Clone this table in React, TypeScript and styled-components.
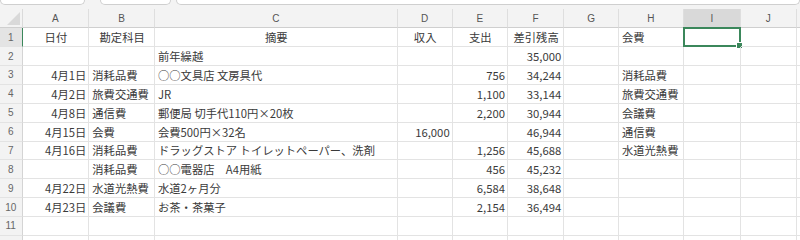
import React from 'react'
import styled, { createGlobalStyle } from 'styled-components'

const GlobalStyle = createGlobalStyle`
  html, body {
    margin: 0;
    padding: 0;
    background: #ffffff;
  }
  body {
    font-family: 'Noto Sans CJK JP', 'Noto Sans', sans-serif;
  }
`

const COLS = ['A', 'B', 'C', 'D', 'E', 'F', 'G', 'H', 'I', 'J']
const COL_WIDTHS = [22.5, 66.8, 65.7, 242.7, 55, 55.3, 56.3, 54.7, 65, 56.7, 56]
const ROW_H = 18.88

type Align = 'left' | 'center' | 'right'

// default alignment per column for body rows
const BODY_ALIGN: Align[] = ['right', 'left', 'left', 'right', 'right', 'right', 'left', 'left', 'left', 'left']

const ROWS: string[][] = [
  ['日付', '勘定科目', '摘要', '収入', '支出', '差引残高', '', '会費', '', ''],
  ['', '', '前年繰越', '', '', '35,000', '', '', '', ''],
  ['4月1日', '消耗品費', '○○文具店 文房具代', '', '756', '34,244', '', '消耗品費', '', ''],
  ['4月2日', '旅費交通費', 'JR', '', '1,100', '33,144', '', '旅費交通費', '', ''],
  ['4月8日', '通信費', '郵便局 切手代110円×20枚', '', '2,200', '30,944', '', '会議費', '', ''],
  ['4月15日', '会費', '会費500円×32名', '16,000', '', '46,944', '', '通信費', '', ''],
  ['4月16日', '消耗品費', 'ドラッグストア トイレットペーパー、洗剤', '', '1,256', '45,688', '', '水道光熱費', '', ''],
  ['', '消耗品費', '○○電器店　A4用紙', '', '456', '45,232', '', '', '', ''],
  ['4月22日', '水道光熱費', '水道2ヶ月分', '', '6,584', '38,648', '', '', '', ''],
  ['4月23日', '会議費', 'お茶・茶菓子', '', '2,154', '36,494', '', '', '', ''],
  ['', '', '', '', '', '', '', '', '', ''],
]

// empty trailing row so the gridlines run on past row 11
const FILLER = ['', '', '', '', '', '', '', '', '', '']

const Page = styled.div`
  width: 800px;
  height: 240px;
  overflow: hidden;
  background: #ffffff;
`

const FormulaStrip = styled.div`
  display: flex;
  align-items: flex-start;
  height: 9px;
  background: #f3f3f3;
`

const StripBox = styled.div<{ $w?: number; $ml: number }>`
  box-sizing: border-box;
  height: 5px;
  margin-left: ${p => p.$ml}px;
  ${p => (p.$w ? `width: ${p.$w}px;` : 'flex: 1;')}
  background: #ffffff;
  border: 1px solid #cfcfcf;
  border-top: none;
  border-radius: 0 0 5px 5px;
`

const Grid = styled.div`
  display: grid;
  grid-template-columns: ${COL_WIDTHS.map(w => `${w}px`).join(' ')} 1fr;
  grid-template-rows: 19.3px repeat(${ROWS.length + 1}, ${ROW_H}px);
`

const Corner = styled.div`
  position: relative;
  box-sizing: border-box;
  background: #f3f3f3;
  border-right: 1px solid #dadada;
  border-bottom: 1px solid #cfcfcf;

  &::after {
    content: '';
    position: absolute;
    right: 2px;
    bottom: 2px;
    width: 0;
    height: 0;
    border-left: 13px solid transparent;
    border-bottom: 13px solid #d9d9d9;
  }
`

const ColHeader = styled.div<{ $active?: boolean }>`
  box-sizing: border-box;
  display: flex;
  align-items: center;
  justify-content: center;
  background: ${p => (p.$active ? '#d9d9d9' : '#f3f3f3')};
  border-right: 1px solid #dedede;
  border-bottom: 1px solid ${p => (p.$active ? '#3b875b' : '#cfcfcf')};
  color: #555;
  font-family: 'Liberation Sans', 'Noto Sans', sans-serif;
  font-size: 10px;
`

const RowHeader = styled.div<{ $active?: boolean }>`
  box-sizing: border-box;
  display: flex;
  align-items: center;
  justify-content: center;
  background: ${p => (p.$active ? '#e4e4e4' : '#f3f3f3')};
  border-right: 1px solid ${p => (p.$active ? '#3b875b' : '#d4d4d4')};
  border-bottom: 1px solid #e3e3e3;
  color: #666;
  font-family: 'Liberation Sans', 'Noto Sans', sans-serif;
  font-size: 10px;
`

const Cell = styled.div<{ $align: Align }>`
  position: relative;
  box-sizing: border-box;
  display: flex;
  align-items: center;
  justify-content: ${p => (p.$align === 'left' ? 'flex-start' : p.$align === 'right' ? 'flex-end' : 'center')};
  padding: 0 2px 0 3px;
  border-right: 1px solid #e3e3e3;
  border-bottom: 1px solid #e3e3e3;
  color: #3a3a3a;
  font-size: 11.3px;
  white-space: nowrap;
  overflow: visible;
`

const Selection = styled.div`
  position: absolute;
  left: -1px;
  top: -1px;
  right: -1px;
  bottom: -1px;
  border: 2px solid #3b875b;
  pointer-events: none;

  &::after {
    content: '';
    position: absolute;
    right: -4px;
    bottom: -4px;
    width: 5px;
    height: 5px;
    background: #3b875b;
    border: 1px solid #ffffff;
  }
`

const ACTIVE_ROW = 0
const ACTIVE_COL = 8

export default function App() {
  return (
    <Page>
      <GlobalStyle />
      <FormulaStrip>
        <StripBox $ml={0} $w={85} />
        <StripBox $ml={15} $w={71} />
        <StripBox $ml={5} />
      </FormulaStrip>
      <Grid>
        <Corner />
        {COLS.map((c, i) => (
          <ColHeader key={c} $active={i === ACTIVE_COL}>{c}</ColHeader>
        ))}
        <ColHeader />
        {ROWS.map((row, r) => (
          <React.Fragment key={r}>
            <RowHeader $active={r === ACTIVE_ROW}>{r + 1}</RowHeader>
            {row.map((text, c) => (
              <Cell
                key={c}
                $align={r === 0 && c < 6 ? 'center' : BODY_ALIGN[c]}
              >
                {text}
                {r === ACTIVE_ROW && c === ACTIVE_COL && <Selection />}
              </Cell>
            ))}
            <Cell $align="left" />
          </React.Fragment>
        ))}
        <RowHeader />
        {FILLER.map((_, c) => (
          <Cell key={c} $align="left" />
        ))}
        <Cell $align="left" />
      </Grid>
    </Page>
  )
}
